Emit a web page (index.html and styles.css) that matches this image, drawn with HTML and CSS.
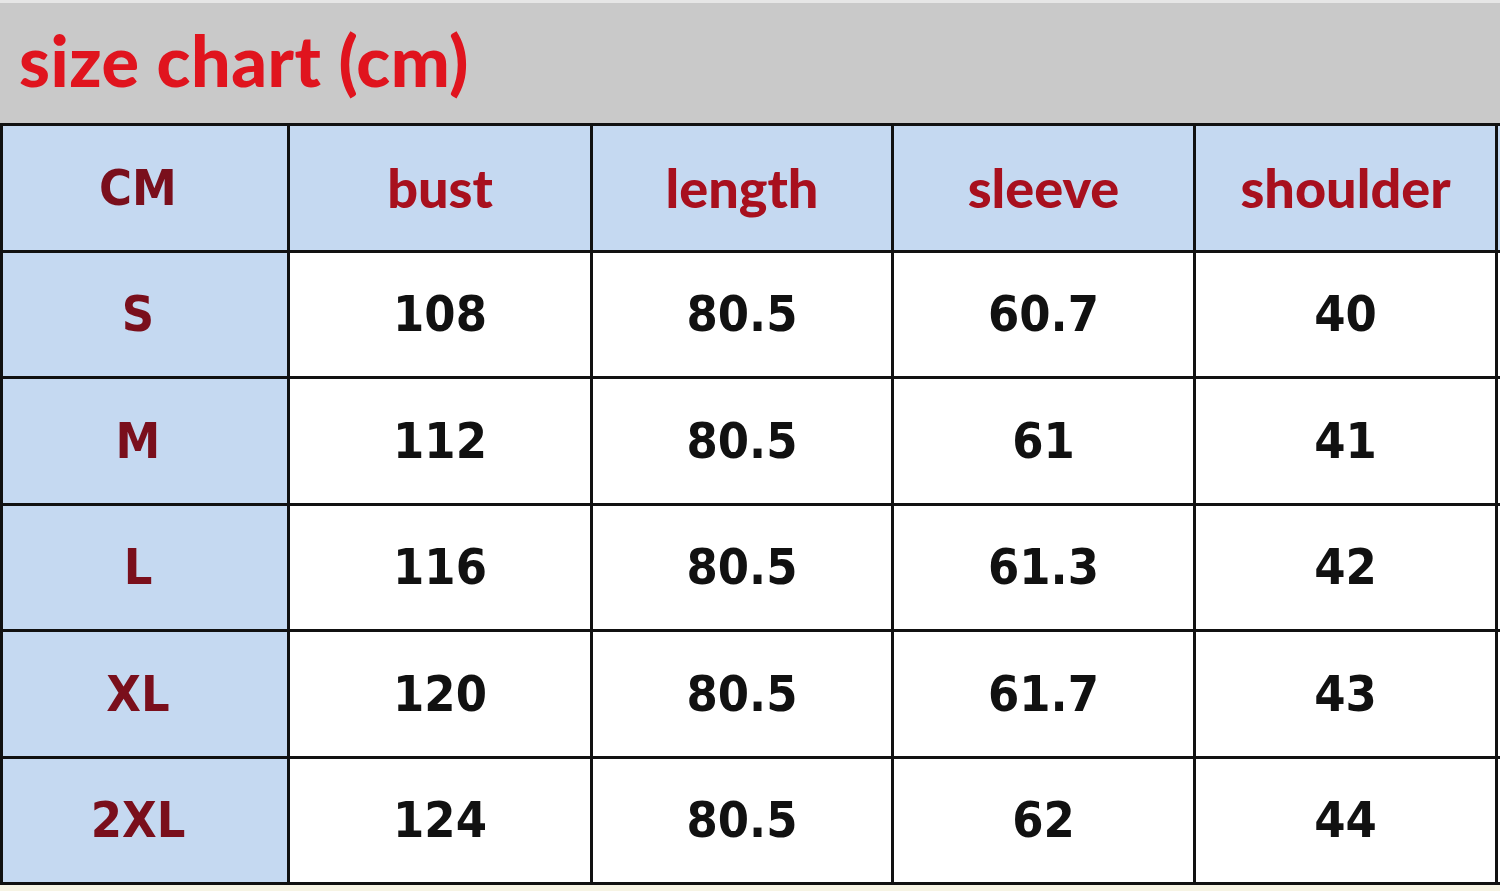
FILE: index.html
```html
<!DOCTYPE html>
<html>
<head>
<meta charset="utf-8">
<link rel="stylesheet" href="styles.css">
</head>
<body>
<div class="page">
  <div class="banner"><h1 class="title">size chart (cm)</h1></div>
  <div class="chart">
    <div class="cell side head-cm">CM</div>
    <div class="cell head">bust</div>
    <div class="cell head">length</div>
    <div class="cell head">sleeve</div>
    <div class="cell head">shoulder</div>
    <div class="cell head"></div>

    <div class="cell side">S</div>
    <div class="cell num">108</div>
    <div class="cell num">80.5</div>
    <div class="cell num">60.7</div>
    <div class="cell num">40</div>
    <div class="cell num"></div>

    <div class="cell side">M</div>
    <div class="cell num">112</div>
    <div class="cell num">80.5</div>
    <div class="cell num">61</div>
    <div class="cell num">41</div>
    <div class="cell num"></div>

    <div class="cell side">L</div>
    <div class="cell num">116</div>
    <div class="cell num">80.5</div>
    <div class="cell num">61.3</div>
    <div class="cell num">42</div>
    <div class="cell num"></div>

    <div class="cell side">XL</div>
    <div class="cell num">120</div>
    <div class="cell num">80.5</div>
    <div class="cell num">61.7</div>
    <div class="cell num">43</div>
    <div class="cell num"></div>

    <div class="cell side">2XL</div>
    <div class="cell num">124</div>
    <div class="cell num">80.5</div>
    <div class="cell num">62</div>
    <div class="cell num">44</div>
    <div class="cell num"></div>
  </div>
  <div class="footer-strip"></div>
</div>
</body>
</html>
```

FILE: styles.css
```css
html, body {
  margin: 0;
  padding: 0;
  background: #ffffff;
}

.page {
  width: 1500px;
  height: 891px;
  overflow: hidden;
  display: flex;
  flex-direction: column;
}

.banner {
  height: 123px;
  flex: none;
  background: #c9c9c9;
  border-top: 3px solid #e6e6e6;
  display: flex;
  align-items: center;
  padding-left: 19px;
  box-sizing: border-box;
}

.title {
  margin: 0;
  margin-top: -6px;
  font-family: "Lato", "Open Sans", sans-serif;
  font-weight: 900;
  font-size: 70px;
  color: #e0141e;
  letter-spacing: 0.5px;
}

.chart {
  flex: none;
  display: grid;
  grid-template-columns: 284px 300px 298px 299px 299px 100px;
  grid-auto-rows: 123.5px;
  gap: 3px;
  padding: 3px;
  background: #111111;
  width: 1560px;
  box-sizing: border-box;
}

.cell {
  display: flex;
  align-items: center;
  justify-content: center;
  background: #ffffff;
}

.side {
  background: #c5d9f1;
  padding-right: 14px;
  font-family: "DejaVu Sans", sans-serif;
  font-stretch: semi-condensed;
  font-weight: 700;
  font-size: 50px;
  color: #7a0f1c;
}

.head {
  background: #c5d9f1;
  font-family: "Lato", "Open Sans", sans-serif;
  font-weight: 900;
  font-size: 54px;
  color: #a8101e;
}

.num {
  font-family: "DejaVu Sans", sans-serif;
  font-stretch: semi-condensed;
  font-weight: 700;
  font-size: 50px;
  color: #111111;
}

.footer-strip {
  flex: 1;
  background: #f7f4e4;
}
```
